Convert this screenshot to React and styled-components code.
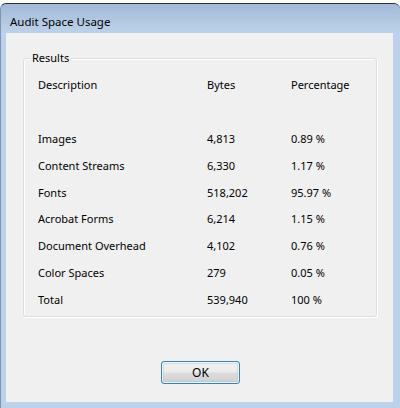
import React from 'react'
import styled, { createGlobalStyle } from 'styled-components'

const GlobalStyle = createGlobalStyle`
  html, body {
    margin: 0;
    padding: 0;
    background: #ffffff;
  }
  body {
    font-family: "Noto Sans", "Liberation Sans", sans-serif;
    font-size: 11px;
    color: #000;
  }
`

const Screen = styled.div`
  width: 400px;
  height: 408px;
  padding-top: 3px;
  box-sizing: border-box;
  overflow: hidden;
`

const Window = styled.div`
  height: 405px;
  box-sizing: border-box;
  border-top: 1px solid #2c2f33;
  border-left: 1px solid #7f95ad;
  border-radius: 6px 6px 0 0;
  background: linear-gradient(180deg, #a2bad7 0px, #b3c9e2 18px, #bdd2ea 30px, #bcd2ea 100%);
  padding: 0 7px 6px 5px;
  display: flex;
  flex-direction: column;
`

const TitleBar = styled.div`
  height: 29px;
  display: flex;
  align-items: center;
  padding: 5px 0 0 4px;
  box-sizing: border-box;
  font-size: 11.5px;
  color: #000;
`

const Client = styled.div`
  flex: 1;
  background: #f0f0f0;
  display: flex;
  flex-direction: column;
  padding: 25px 16px 0 17px;
`

const GroupBox = styled.div`
  height: 259px;
  box-sizing: border-box;
  border: 1px solid #d5dfe5;
  border-radius: 3px;
  box-shadow: inset 1px 1px 0 #ffffff, 1px 1px 0 #ffffff;
  padding: 12px 0 0 14px;
  position: relative;
`

const Legend = styled.span`
  position: absolute;
  top: -8px;
  left: 6px;
  padding: 0 2px;
  background: #f0f0f0;
  font-size: 11px;
  line-height: 14px;
`

const Table = styled.div`
  display: grid;
  grid-template-columns: 169px 84px 1fr;
  grid-auto-rows: 26.9px;
  align-items: center;
`

const Cell = styled.div`
  white-space: nowrap;
  font-size: 11px;
`

const Spacer = styled.div`
  grid-column: 1 / -1;
  height: 28.8px;
`

const Footer = styled.div`
  flex: 1;
  display: flex;
  justify-content: center;
  padding-top: 44px;
  padding-left: 1px;
`

const Button = styled.button`
  width: 79px;
  height: 23px;
  box-sizing: border-box;
  border: 1px solid #3c7fb1;
  border-radius: 3px;
  background: linear-gradient(180deg, #f2f2f2 0%, #ebebeb 48%, #dddddd 52%, #cfcfcf 100%);
  box-shadow: inset 0 0 0 1px rgba(255, 255, 255, 0.75), inset 0 0 0 2px rgba(125, 195, 240, 0.35);
  font-family: "Noto Sans", "Liberation Sans", sans-serif;
  font-size: 12px;
  color: #000;
  padding: 0;
`

const rows = [
  ['Images', '4,813', '0.89 %'],
  ['Content Streams', '6,330', '1.17 %'],
  ['Fonts', '518,202', '95.97 %'],
  ['Acrobat Forms', '6,214', '1.15 %'],
  ['Document Overhead', '4,102', '0.76 %'],
  ['Color Spaces', '279', '0.05 %'],
  ['Total', '539,940', '100 %'],
]

const App = () => {
  return (
    <Screen>
      <GlobalStyle />
      <Window>
        <TitleBar>Audit Space Usage</TitleBar>
        <Client>
          <GroupBox>
            <Legend>Results</Legend>
            <Table>
              <Cell>Description</Cell>
              <Cell>Bytes</Cell>
              <Cell>Percentage</Cell>
              <Spacer />
              {rows.map(([name, bytes, pct]) => (
                <React.Fragment key={name}>
                  <Cell>{name}</Cell>
                  <Cell>{bytes}</Cell>
                  <Cell>{pct}</Cell>
                </React.Fragment>
              ))}
            </Table>
          </GroupBox>
          <Footer>
            <Button>OK</Button>
          </Footer>
        </Client>
      </Window>
    </Screen>
  )
}

export default App
